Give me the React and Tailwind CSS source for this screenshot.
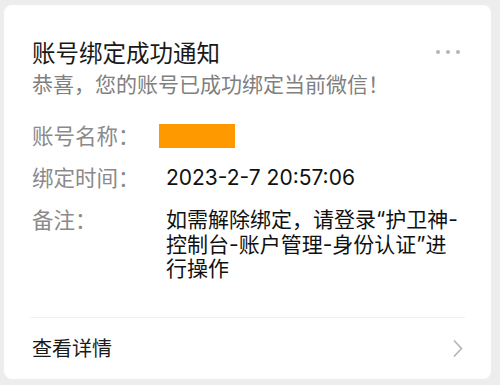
export default function App() {
  return (
    <div className="min-h-screen bg-[#ededed] pt-[5px] pl-[4px] font-['Inter','Noto_Sans_CJK_SC',sans-serif]">
      <div className="w-[487px] h-[374px] bg-white rounded-[8px] px-[28px] flex flex-col">
        <div className="relative pt-[34px]">
          <div className="text-[23.5px] leading-[30px] text-[#191919]">账号绑定成功通知</div>
          <div className="text-[21px] leading-[32px] text-[#808080]">恭喜，您的账号已成功绑定当前微信！</div>
          <div className="absolute right-[3px] top-[45px] flex gap-[6px]">
            <span className="w-[4px] h-[4px] rounded-full bg-[#b5b5b5]"></span>
            <span className="w-[4px] h-[4px] rounded-full bg-[#b5b5b5]"></span>
            <span className="w-[4px] h-[4px] rounded-full bg-[#b5b5b5]"></span>
          </div>
        </div>
        <div className="mt-[23px] flex flex-col gap-[17.5px] text-[21.5px] leading-[24.5px]">
          <div className="flex">
            <div className="w-[127px] shrink-0 text-[#8a8a8a]">账号名称：</div>
            <div className="w-[76px] h-[24px] bg-[#ff9900]"></div>
          </div>
          <div className="flex">
            <div className="w-[134px] shrink-0 text-[#8a8a8a]">绑定时间：</div>
            <div className="text-[21px] text-[#111111]">2023-2-7 20:57:06</div>
          </div>
          <div className="flex">
            <div className="w-[134px] shrink-0 text-[#8a8a8a]">备注：</div>
            <div className="text-[21px] text-[#111111] whitespace-nowrap">
              如需解除绑定，请登录“护卫神-<br />控制台-账户管理-身份认证”进<br />行操作
            </div>
          </div>
        </div>
        <div className="mt-auto mx-[-2px] h-px bg-[#f0f0f0]"></div>
        <div className="h-[61px] flex items-center justify-between">
          <div className="text-[20px] text-[#1a1a1a]">查看详情</div>
          <svg width="12" height="19" viewBox="0 0 12 19" className="mr-[-1px]">
            <path d="M2 1.5 L9.5 9.5 L2 17.5" fill="none" stroke="#b3b3b3" strokeWidth="1.6" />
          </svg>
        </div>
      </div>
    </div>
  );
}
